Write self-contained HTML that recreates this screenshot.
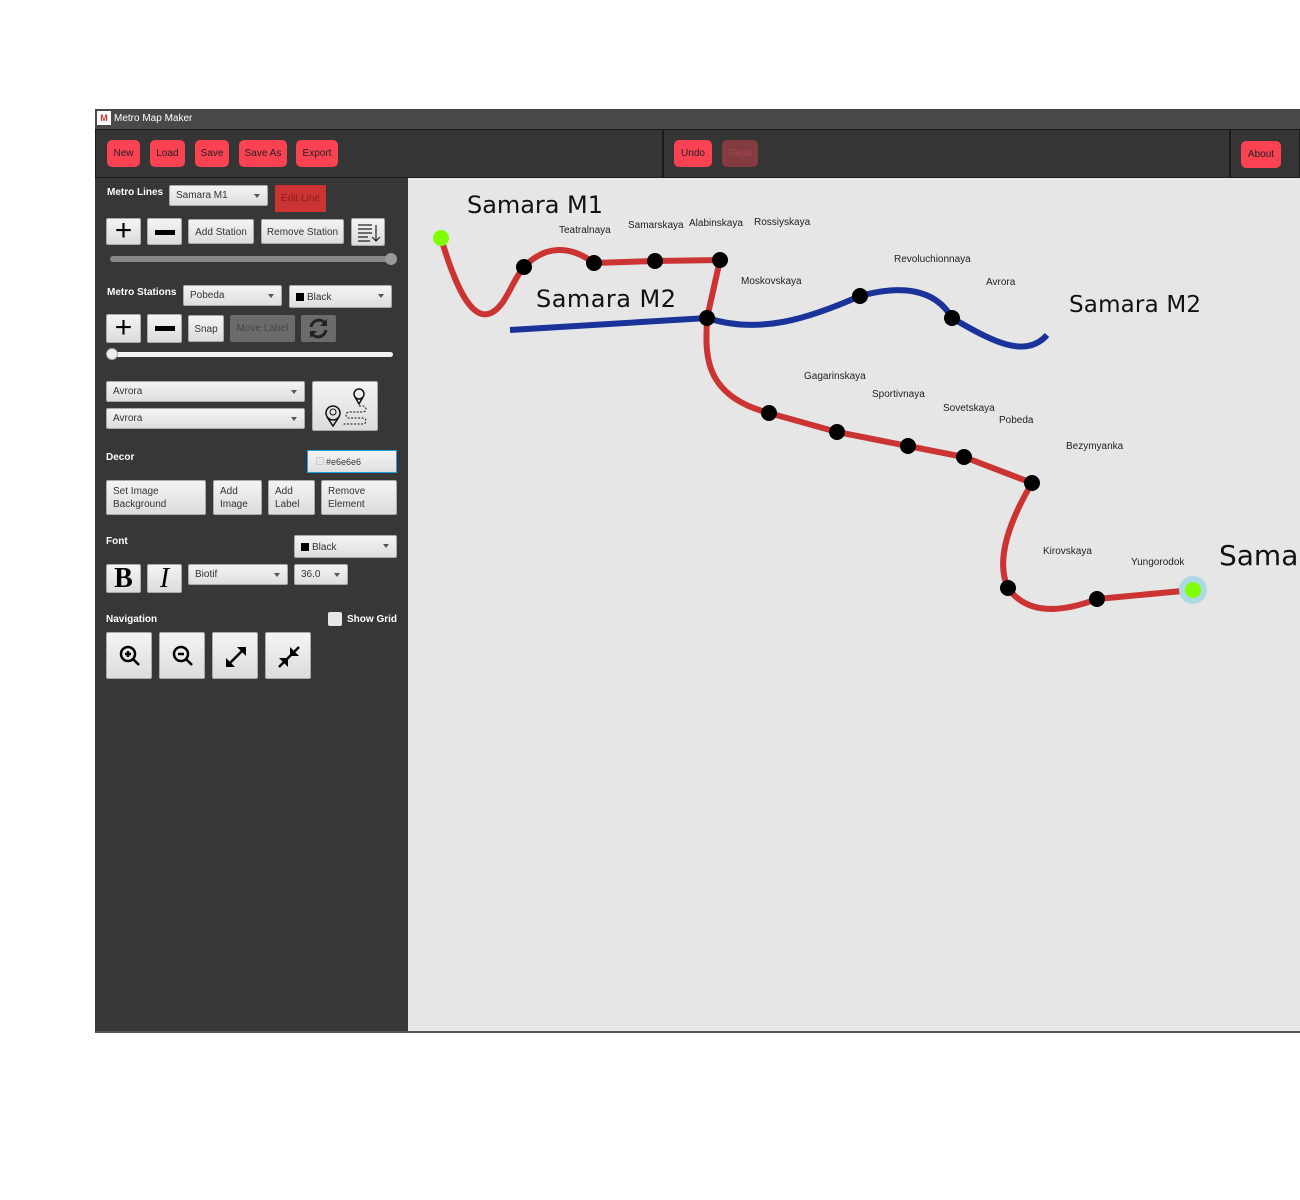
<!DOCTYPE html>
<html><head><meta charset="utf-8"><style>
*{margin:0;padding:0;box-sizing:border-box}
body{width:1300px;height:1200px;background:#fff;position:relative;overflow:hidden;font-family:"Liberation Sans",sans-serif}
.a{position:absolute}
.title{left:95px;top:109px;width:1205px;height:20px;background:#4a4947;color:#fff;font-size:10px;line-height:19px;padding-left:19px}
.logo{left:97px;top:111px;width:14px;height:14px;background:#fff;color:#c33;font-size:9px;font-weight:bold;line-height:14px;text-align:center}
.tb{top:129px;height:49px;background:#353535;border:1px solid #1a1a1a}
.rb{background:#fb4253;border-radius:5px;color:#222;font-size:10px;text-align:center;line-height:28px;height:27px}
.panel{left:95px;top:178px;width:313px;height:855px;background:#373737}
.canvas{left:408px;top:178px;width:892px;height:854px;background:#e6e6e6}
.lbl{color:#fff;font-weight:bold;font-size:10px}
.btn{background:linear-gradient(#f4f4f4,#dcdcdc);border:1px solid #aaa;border-radius:2px;color:#333;font-size:10px;line-height:13px}
.cb{background:linear-gradient(#f4f4f4,#dedede);border:1px solid #aaa;border-radius:2px;color:#333;font-size:10px;padding-left:6px;line-height:20px}
.cb:after{content:"";position:absolute;right:7px;top:8px;border-left:3px solid transparent;border-right:3px solid transparent;border-top:4px solid #555}
.sq{display:inline-block;width:8px;height:8px;background:#000;margin-right:3px;vertical-align:-1px}
svg text{font-family:"Liberation Sans",sans-serif}
svg .big{font-family:"DejaVu Sans",sans-serif}
</style></head><body>
<div class="a title">Metro Map Maker</div>
<div class="a logo">M</div>
<div class="a tb" style="left:95px;width:568px"></div>
<div class="a tb" style="left:663px;width:567px"></div>
<div class="a tb" style="left:1230px;width:70px"></div>
<div class="a rb" style="left:107px;top:140px;width:33px">New</div>
<div class="a rb" style="left:150px;top:140px;width:35px">Load</div>
<div class="a rb" style="left:195px;top:140px;width:34px">Save</div>
<div class="a rb" style="left:239px;top:140px;width:48px">Save As</div>
<div class="a rb" style="left:296px;top:140px;width:42px">Export</div>
<div class="a rb" style="left:674px;top:140px;width:38px">Undo</div>
<div class="a rb" style="left:722px;top:140px;width:36px;background:#833a41;color:#a34650">Redo</div>
<div class="a rb" style="left:1241px;top:141px;width:40px">About</div>

<div class="a panel"></div>
<div class="a canvas"></div>
<div class="a" style="left:95px;top:1031px;width:1205px;height:2px;background:#555"></div>

<div class="a lbl" style="left:107px;top:187px">Metro Lines</div>
<div class="a cb" style="left:169px;top:185px;width:99px;height:21px">Samara M1</div>
<div class="a" style="left:275px;top:185px;width:51px;height:27px;background:#cc3333;color:#8a1e1e;font-size:10px;line-height:28px;text-align:center">Edit Line</div>
<div class="a btn" style="left:106px;top:218px;width:35px;height:27px;font-size:30px;line-height:24px;text-align:center;color:#000">+</div>
<div class="a btn" style="left:147px;top:218px;width:35px;height:27px"><div class="a" style="left:7px;top:11px;width:20px;height:5px;background:#000"></div></div>
<div class="a btn" style="left:188px;top:219px;width:66px;height:25px;text-align:center;line-height:25px">Add Station</div>
<div class="a btn" style="left:261px;top:219px;width:83px;height:25px;text-align:center;line-height:25px">Remove Station</div>
<div class="a btn" style="left:351px;top:218px;width:34px;height:28px"><svg width="34" height="28"><path d="M6 6h14M6 10h14M6 14h14M6 18h10M6 22h12M24 6v16M20 18l4 4 4-4" stroke="#222" stroke-width="1.2" fill="none"/></svg></div>
<div class="a" style="left:110px;top:256px;width:284px;height:6px;background:#888;border-radius:3px"></div>
<div class="a" style="left:385px;top:253px;width:12px;height:12px;background:#999;border-radius:6px"></div>

<div class="a lbl" style="left:107px;top:287px">Metro Stations</div>
<div class="a cb" style="left:183px;top:285px;width:99px;height:21px">Pobeda</div>
<div class="a cb" style="left:289px;top:285px;width:103px;height:23px;line-height:23px"><span class="sq"></span>Black</div>
<div class="a btn" style="left:106px;top:314px;width:35px;height:29px;font-size:30px;line-height:26px;text-align:center;color:#000">+</div>
<div class="a btn" style="left:147px;top:314px;width:35px;height:29px"><div class="a" style="left:7px;top:11px;width:20px;height:5px;background:#000"></div></div>
<div class="a btn" style="left:188px;top:315px;width:36px;height:27px;text-align:center;line-height:27px">Snap</div>
<div class="a" style="left:230px;top:315px;width:65px;height:27px;background:#6b6b6b;color:#444;font-size:10px;text-align:center;line-height:28px;border-radius:2px">Move Label</div>
<div class="a" style="left:301px;top:315px;width:35px;height:27px;background:#6b6b6b;border-radius:2px"><svg width="35" height="27"><path d="M10 12a8 8 0 0 1 14-4M25 15a8 8 0 0 1-14 4" stroke="#222" stroke-width="3" fill="none"/><path d="M26 4v7h-7zM9 23v-7h7z" fill="#222"/></svg></div>
<div class="a" style="left:110px;top:352px;width:283px;height:5px;background:#f4f4f4;border-radius:3px"></div>
<div class="a" style="left:106px;top:348px;width:12px;height:12px;background:#eee;border:1px solid #aaa;border-radius:6px"></div>

<div class="a cb" style="left:106px;top:381px;width:199px;height:21px">Avrora</div>
<div class="a cb" style="left:106px;top:408px;width:199px;height:21px">Avrora</div>
<div class="a btn" style="left:312px;top:381px;width:66px;height:50px"><svg width="66" height="50"><circle cx="20" cy="31" r="7" stroke="#111" stroke-width="1.5" fill="none"/><circle cx="20" cy="30" r="3" stroke="#111" fill="none"/><path d="M14 35l6 9 6-9" stroke="#111" stroke-width="1.5" fill="none"/><circle cx="46" cy="12" r="5" stroke="#111" stroke-width="1.5" fill="none"/><path d="M42 15l4 7 4-7" stroke="#111" stroke-width="1.5" fill="none"/><path d="M46 24h4a3 3 0 0 1 0 6h-14a3 3 0 0 0 0 6h14a3 3 0 0 1 0 6h-20" stroke="#111" stroke-dasharray="2 1.5" fill="none"/></svg></div>

<div class="a lbl" style="left:106px;top:452px">Decor</div>
<div class="a" style="left:307px;top:450px;width:90px;height:23px;background:linear-gradient(#f4f4f4,#e0e0e0);border:1px solid #1ea0e0;color:#333;font-size:9px;line-height:22px;padding-left:18px">#e6e6e6<span class="a" style="left:8px;top:6px;width:8px;height:8px;border:1px solid #ccc;background:#e6e6e6"></span></div>
<div class="a btn" style="left:106px;top:480px;width:100px;height:35px;padding:4px 6px">Set Image Background</div>
<div class="a btn" style="left:213px;top:480px;width:49px;height:35px;padding:4px 6px">Add Image</div>
<div class="a btn" style="left:268px;top:480px;width:47px;height:35px;padding:4px 6px">Add Label</div>
<div class="a btn" style="left:321px;top:480px;width:76px;height:35px;padding:4px 6px">Remove Element</div>

<div class="a lbl" style="left:106px;top:536px">Font</div>
<div class="a cb" style="left:294px;top:535px;width:103px;height:23px;line-height:23px"><span class="sq"></span>Black</div>
<div class="a btn" style="left:106px;top:564px;width:35px;height:29px;font-family:'Liberation Serif',serif;font-weight:bold;font-size:28px;line-height:27px;text-align:center;color:#000">B</div>
<div class="a btn" style="left:147px;top:564px;width:35px;height:29px;font-family:'Liberation Serif',serif;font-style:italic;font-size:28px;line-height:27px;text-align:center;color:#000">I</div>
<div class="a cb" style="left:188px;top:564px;width:100px;height:21px">Biotif</div>
<div class="a cb" style="left:294px;top:564px;width:54px;height:21px">36.0</div>

<div class="a lbl" style="left:106px;top:614px">Navigation</div>
<div class="a" style="left:328px;top:612px;width:14px;height:14px;background:#e6e6e6;border-radius:2px"></div>
<div class="a lbl" style="left:347px;top:614px">Show Grid</div>
<div class="a btn" style="left:106px;top:632px;width:46px;height:47px"><svg width="46" height="47"><circle cx="21" cy="21" r="7" stroke="#000" stroke-width="2.5" fill="none"/><path d="M26 26l6 6M18 21h6M21 18v6" stroke="#000" stroke-width="2.5"/></svg></div>
<div class="a btn" style="left:159px;top:632px;width:46px;height:47px"><svg width="46" height="47"><circle cx="21" cy="21" r="7" stroke="#000" stroke-width="2.5" fill="none"/><path d="M26 26l6 6M18 21h6" stroke="#000" stroke-width="2.5"/></svg></div>
<div class="a btn" style="left:212px;top:632px;width:46px;height:47px"><svg width="46" height="47"><path d="M15 32l16-16" stroke="#000" stroke-width="2.5"/><path d="M13 34v-9l9 9zM33 14v9l-9-9z" fill="#000"/></svg></div>
<div class="a btn" style="left:265px;top:632px;width:46px;height:47px"><svg width="46" height="47"><path d="M13 34l20-20" stroke="#000" stroke-width="2.5"/><path d="M22 25v9l-9-9zM24 23v-9l9 9z" fill="#000"/></svg></div>

<svg class="a" style="left:0;top:0" width="1300" height="1200">
<g fill="none" stroke-width="6" stroke-linecap="butt">
<path d="M441 238C455 285 470 318 488 314C505 310 512 280 524 267C545 245 570 245 594 263L655 261L720 260L707 318C706 350 700 395 769 413L837 432L908 446L964 457L1032 483C1010 520 995 560 1008 588C1025 612 1055 615 1097 599L1193 590" stroke="#cc3333"/>
<path d="M510 330L707 318C760 335 810 318 860 296C900 285 935 288 952 318C990 340 1025 360 1047 335" stroke="#1a339a"/>
</g>
<g fill="#000"><circle cx="524" cy="267" r="8"/><circle cx="594" cy="263" r="8"/><circle cx="655" cy="261" r="8"/><circle cx="720" cy="260" r="8"/><circle cx="707" cy="318" r="8"/><circle cx="860" cy="296" r="8"/><circle cx="952" cy="318" r="8"/><circle cx="769" cy="413" r="8"/><circle cx="837" cy="432" r="8"/><circle cx="908" cy="446" r="8"/><circle cx="964" cy="457" r="8"/><circle cx="1032" cy="483" r="8"/><circle cx="1008" cy="588" r="8"/><circle cx="1097" cy="599" r="8"/></g>
<circle cx="441" cy="238" r="8" fill="#7fff00"/>
<circle cx="1193" cy="590" r="14" fill="#add8e6"/><circle cx="1193" cy="590" r="8" fill="#7fff00"/>
<g font-size="10" fill="#222">
<text x="559" y="233">Teatralnaya</text><text x="628" y="228">Samarskaya</text><text x="689" y="226">Alabinskaya</text><text x="754" y="225">Rossiyskaya</text>
<text x="741" y="284">Moskovskaya</text><text x="894" y="262">Revoluchionnaya</text><text x="986" y="285">Avrora</text>
<text x="804" y="379">Gagarinskaya</text><text x="872" y="397">Sportivnaya</text><text x="943" y="411">Sovetskaya</text><text x="999" y="423">Pobeda</text>
<text x="1066" y="449">Bezymyanka</text><text x="1043" y="554">Kirovskaya</text><text x="1131" y="565">Yungorodok</text>
</g>
<g class="big" fill="#111"><text class="big" x="467" y="213" font-size="24" textLength="136">Samara M1</text><text class="big" x="536" y="307" font-size="24" textLength="140">Samara M2</text><text class="big" x="1069" y="312" font-size="23" textLength="132">Samara M2</text><text class="big" x="1219" y="565" font-size="28">Samara</text></g>
</svg>
</body></html>
